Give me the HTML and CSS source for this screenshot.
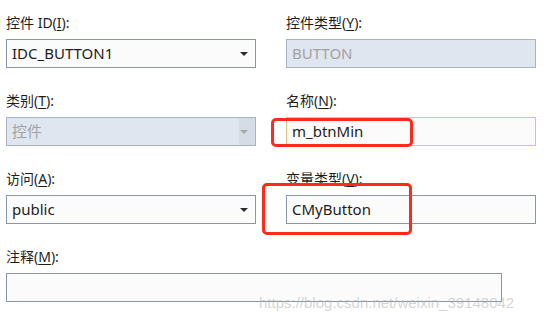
FILE: index.html
```html
<!DOCTYPE html>
<html lang="en">
<head>
    <meta charset="UTF-8">
    <title>添加成员变量</title>
    <link rel="stylesheet" href="styles.css">
</head>
<body>
    <div class="form">
        <div class="field">
            <label>控件 ID(<u>I</u>):</label>
            <div class="box combo"><span>IDC_BUTTON1</span><i class="arrow"></i></div>
        </div>
        <div class="field">
            <label>控件类型(<u>Y</u>):</label>
            <div class="box disabled"><span>BUTTON</span></div>
        </div>
        <div class="field">
            <label>类别(<u>T</u>):</label>
            <div class="box combo disabled"><span>控件</span><i class="arrow"></i></div>
        </div>
        <div class="field">
            <label>名称(<u>N</u>):</label>
            <div class="box focus"><span>m_btnMin</span></div>
            <div class="mark mark-name"></div>
        </div>
        <div class="field">
            <label>访问(<u>A</u>):</label>
            <div class="box combo"><span>public</span><i class="arrow"></i></div>
        </div>
        <div class="field">
            <label>变量类型(<u>V</u>):</label>
            <div class="box"><span>CMyButton</span></div>
            <div class="mark mark-type"></div>
        </div>
        <div class="field wide">
            <label>注释(<u>M</u>):</label>
            <div class="box"></div>
        </div>
    </div>
    <div class="watermark">https://blog.csdn.net/weixin_39148042</div>
</body>
</html>
```

FILE: styles.css
```css
body {
    margin: 0;
    background: #ffffff;
    font-family: "Noto Sans", "Noto Sans CJK SC", sans-serif;
    color: #1e1e1e;
    position: relative;
    width: 559px;
    height: 323px;
    overflow: hidden;
}
.form {
    display: grid;
    grid-template-columns: 250px 250px;
    column-gap: 30px;
    padding: 13px 0 0 6px;
}
.field {
    position: relative;
    height: 78px;
}
.field.wide {
    grid-column: 1 / 3;
    width: 496px;
}
label {
    display: block;
    font-size: 14px;
    line-height: 20px;
    height: 26px;
}
u {
    text-decoration-thickness: 1px;
    text-underline-offset: 2px;
}
.box {
    position: relative;
    height: 29px;
    box-sizing: border-box;
    border: 1px solid #8a97a8;
    background: #fbfbfb;
    font-size: 15px;
    line-height: 27px;
    padding-left: 5px;
}
.box.disabled {
    background: #e0e6f0;
    border-color: #a9b3c2;
    color: #a2a2a2;
}
.box.focus {
    border-color: #e6c37c;
}
.arrow {
    position: absolute;
    right: 7px;
    top: 12px;
    width: 0;
    height: 0;
    border-left: 4px solid transparent;
    border-right: 4px solid transparent;
    border-top: 4px solid #2b2b2b;
    z-index: 1;
}
.combo.disabled .arrow {
    border-top-color: #a8a8a8;
}
.combo.disabled::after {
    content: "";
    position: absolute;
    right: 0;
    top: 0;
    width: 16px;
    height: 27px;
    background: #d6dce6;
}
.mark {
    position: absolute;
    border: 3px solid #ff2a1a;
    border-radius: 5px;
}
.mark-name {
    left: -15px;
    top: 27px;
    width: 136px;
    height: 23px;
}
.mark-type {
    left: -24px;
    top: 14px;
    width: 144px;
    height: 46px;
}
.watermark {
    position: absolute;
    left: 259px;
    top: 294px;
    font-family: "Liberation Sans", Arial, sans-serif;
    font-size: 15px;
    color: rgba(175, 175, 175, 0.55);
}
```
